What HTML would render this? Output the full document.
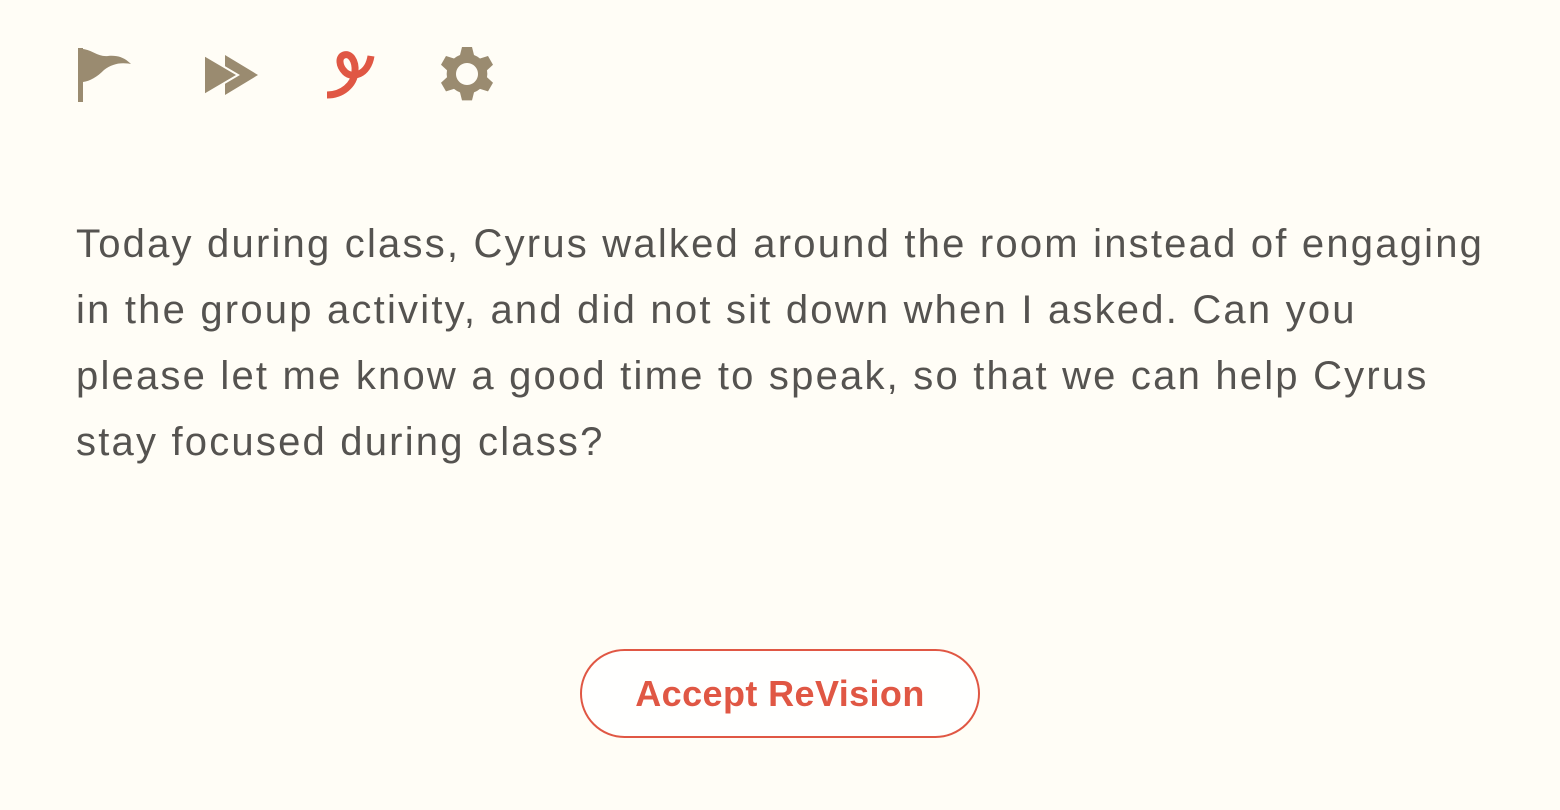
<!DOCTYPE html>
<html><head><style>
body{margin:0;width:1560px;height:810px;background:#fffdf6;position:relative;overflow:hidden;font-family:"Liberation Sans",sans-serif}
svg{position:absolute}
.t{position:absolute;left:76px;top:211px;font-size:40px;line-height:66px;color:#555350;white-space:nowrap;letter-spacing:2.2px}
.b{position:absolute;left:580px;top:649px;width:396px;height:85px;border:2px solid #e05744;border-radius:46px;background:#fffffe;color:#e05744;font-weight:bold;font-size:36px;text-align:center;line-height:85px;letter-spacing:0.4px}
</style></head><body>
<svg width="560" height="130" viewBox="0 0 560 130" style="left:0;top:0">
<g fill="#9a8b70">
<rect x="78" y="48" width="5" height="54"/>
<path d="M83 49 C92 50 98 57 108 56 C118 55 125 58 131 64 C120 62 112 64 104 70 C97 77 90 81 83 82 Z"/>
<path d="M225 55 L258 75 L225 95 Z"/>
<path d="M204 55 L238 75 L204 95 Z" stroke="#fffdf6" stroke-width="2"/>
<path d="M462 47 h10 l2 8 a20 20 0 0 1 6 3.5 l8-2.5 5 8.7-6 5.5 a20 20 0 0 1 0 7 l6 5.5-5 8.7-8-2.5 a20 20 0 0 1-6 3.5 l-2 8 h-10 l-2-8 a20 20 0 0 1-6-3.5 l-8 2.5-5-8.7 6-5.5 a20 20 0 0 1 0-7 l-6-5.5 5-8.7 8 2.5 a20 20 0 0 1 6-3.5 Z M467 63 a11 11 0 1 0 0.01 0 Z" fill-rule="evenodd"/>
</g>
<path d="M327 95 C342 95 354 85 355 72 C356 60 350 53 344 55 C338 57 339 66 345 72 C352 79 368 75 371 56" fill="none" stroke="#e05744" stroke-width="7"/>
</svg>
<div class="t">Today during class, Cyrus walked around the room instead of engaging<br>in the group activity, and did not sit down when I asked. Can you<br>please let me know a good time to speak, so that we can help Cyrus<br>stay focused during class?</div>
<div class="b">Accept ReVision</div>
</body></html>
